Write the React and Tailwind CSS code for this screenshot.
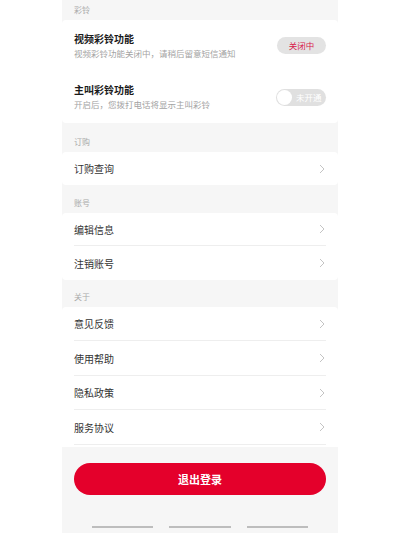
const font = { fontFamily: '"Noto Sans CJK SC", "Noto Sans", sans-serif' }

function Chevron() {
  return (
    <svg width="6" height="10" viewBox="0 0 6 10" className="shrink-0">
      <polyline points="1,1 5,5 1,9" fill="none" stroke="#c4c4c4" strokeWidth="1" />
    </svg>
  )
}

function Header({ label, h }) {
  return (
    <div className={`flex items-end px-3 pb-[5px] ${h}`}>
      <span className="text-[8px] leading-[10px] text-[#aaaaaa]">{label}</span>
    </div>
  )
}

function Row({ label, h = 'h-[34px]', last }) {
  return (
    <div className={`mx-3 flex items-center justify-between ${h} ${last ? '' : 'border-b border-[#eeeeee]'}`}>
      <span className="text-[10px] text-[#333333]">{label}</span>
      <div className="pr-[1px]"><Chevron /></div>
    </div>
  )
}

export default function App() {
  return (
    <div className="w-full h-[533px] bg-white flex justify-center" style={font}>
      <div className="w-[276px] h-full bg-[#f6f6f6] flex flex-col">
        <Header label="彩铃" h="h-[20px]" />

        <div className="bg-white rounded-[4px]">
          <div className="h-[51px] px-3 flex items-center justify-between">
            <div className="flex flex-col">
              <span className="text-[10px] leading-[14px] font-bold text-[#1a1a1a]">视频彩铃功能</span>
              <span className="text-[8.5px] leading-[14px] text-[#a3a3a3]">视频彩铃功能关闭中，请稍后留意短信通知</span>
            </div>
            <span className="w-[49px] h-[17px] rounded-full bg-[#e3e3e3] flex items-center justify-center text-[8.5px] text-[#d8204a]">关闭中</span>
          </div>
          <div className="h-[52px] px-3 flex items-center justify-between">
            <div className="flex flex-col">
              <span className="text-[10px] leading-[14px] font-bold text-[#1a1a1a]">主叫彩铃功能</span>
              <span className="text-[8.5px] leading-[14px] text-[#a3a3a3]">开启后，您拨打电话将显示主叫彩铃</span>
            </div>
            <div className="w-[50px] h-[17px] rounded-full bg-[#e0e0e0] flex items-center pl-[1px] gap-[4px]">
              <span className="w-[15px] h-[15px] rounded-full bg-white" />
              <span className="text-[8.5px] text-white">未开通</span>
            </div>
          </div>
        </div>

        <Header label="订购" h="h-[29px]" />
        <div className="bg-white rounded-[4px]">
          <Row label="订购查询" h="h-[33px]" last />
        </div>

        <Header label="账号" h="h-[28px]" />
        <div className="bg-white rounded-[4px]">
          <Row label="编辑信息" h="h-[33px]" />
          <Row label="注销账号" h="h-[34px]" last />
        </div>

        <Header label="关于" h="h-[27px]" />
        <div className="bg-white rounded-t-[4px] pb-[2px]">
          <Row label="意见反馈" />
          <Row label="使用帮助" h="h-[35px]" />
          <Row label="隐私政策" />
          <Row label="服务协议" h="h-[35px]" />
        </div>

        <div className="px-3 pt-[16px]">
          <button className="w-full h-[32px] rounded-full bg-[#e4002b] text-white text-[11px] font-bold">退出登录</button>
        </div>

        <div className="mt-auto mb-[5px] flex justify-center gap-[16px]">
          <span className="w-[61px] h-[2px] bg-[#bdbdbd]" />
          <span className="w-[62px] h-[2px] bg-[#bdbdbd]" />
          <span className="w-[61px] h-[2px] bg-[#bdbdbd]" />
        </div>
      </div>
    </div>
  )
}
